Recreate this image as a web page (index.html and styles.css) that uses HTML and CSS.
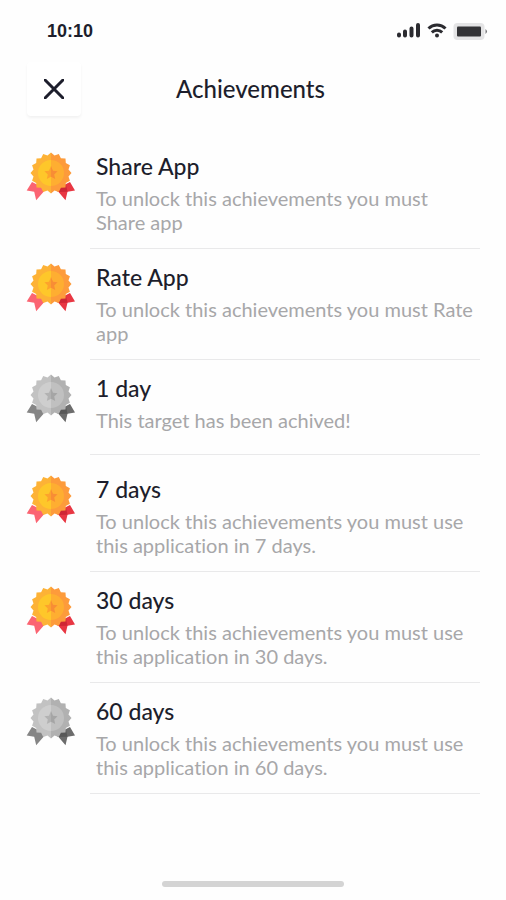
FILE: index.html
```html
<!doctype html>
<html lang="en">
<head>
<meta charset="utf-8">
<meta name="viewport" content="width=device-width, initial-scale=1">
<title>Achievements</title>
<link rel="stylesheet" href="styles.css">
</head>
<body>
<svg class="defs" aria-hidden="true">
	<symbol id="ribbon" viewBox="-25 -21 50 49">
		<path class="tail-left" d="M-19 9-24.300 17.500-16.800 18.700-14.800 27.200-5 16Z"/>
		<path class="tail-right" d="M19 9 24 17.500 16.500 18.700 14.500 27.200 5 16Z"/>
		<path class="tail-fold" d="M5 16 7 19 16.500 18.700 15 12Z"/>
		<path class="rim-left" d="M0-20.5-3.5-17.5-7.8-18.9-9.9-14.8-14.5-14.5-14.8-9.9-18.9-7.8-17.5-3.5-20.5 0-17.5 3.5-18.9 7.8-14.8 9.9-14.5 14.5-9.9 14.8-7.8 18.9-3.5 17.5 0 20.5Z"/>
		<path class="rim-right" d="M0-20.5 3.5-17.5 7.8-18.9 9.9-14.8 14.5-14.5 14.8-9.9 18.9-7.8 17.5-3.5 20.5 0 17.5 3.5 18.9 7.8 14.8 9.9 14.5 14.5 9.9 14.8 7.8 18.9 3.5 17.5 0 20.5Z"/>
		<path class="disc-left" d="M0-13a13 13 0 0 0 0 26Z"/>
		<path class="disc-right" d="M0-13a13 13 0 0 1 0 26Z"/>
		<path class="star-left" d="M0-7-2-2.2-6.600-1.8-3.2 1.6-4.2 6 0 3.8Z"/>
		<path class="star-right" d="M0-7 2-2.2 6.600-1.8 3.2 1.6 4.2 6 0 3.8Z"/>
	</symbol>
</svg>

<div class="status">
	<span class="time">10:10</span>
	<svg class="signals" viewBox="0 0 92 20" aria-hidden="true">
		<g class="bars">
			<path d="M3 13.5v1M9 10.5v4M15.5 7.5v7M22 4v10.500"/>
		</g>
		<g class="wifi">
			<path d="M32.500 7.500a12 12 0 0 1 17 0M35.800 11.300a7.500 7.500 0 0 1 10.400 0"/>
			<circle cx="41" cy="14.500" r="2"/>
		</g>
		<rect class="battery" x="57.500" y="2" width="31" height="17" rx="4"/>
		<rect class="charge" x="61" y="5.500" width="24" height="10" rx="1"/>
		<path class="tip" d="M89.500 8q3 2.500 0 5Z"/>
	</svg>
</div>

<header class="header">
	<button class="close" type="button" aria-label="Close">
		<svg viewBox="0 0 20 20" aria-hidden="true"><path d="M1 1 19 19M19 1 1 19"/></svg>
	</button>
	<h1>Achievements</h1>
</header>

<ul class="list">
	<li>
		<svg class="medal" aria-hidden="true"><use href="#ribbon"/></svg>
		<div class="info">
			<h2>Share App</h2>
			<p>To unlock this achievements you must Share app</p>
		</div>
	</li>
	<li>
		<svg class="medal" aria-hidden="true"><use href="#ribbon"/></svg>
		<div class="info">
			<h2>Rate App</h2>
			<p>To unlock this achievements you must Rate app</p>
		</div>
	</li>
	<li class="short">
		<svg class="medal grey" aria-hidden="true"><use href="#ribbon"/></svg>
		<div class="info">
			<h2>1 day</h2>
			<p>This target has been achived!</p>
		</div>
	</li>
	<li>
		<svg class="medal" aria-hidden="true"><use href="#ribbon"/></svg>
		<div class="info">
			<h2>7 days</h2>
			<p>To unlock this achievements you must use this application in 7 days.</p>
		</div>
	</li>
	<li>
		<svg class="medal" aria-hidden="true"><use href="#ribbon"/></svg>
		<div class="info">
			<h2>30 days</h2>
			<p>To unlock this achievements you must use this application in 30 days.</p>
		</div>
	</li>
	<li>
		<svg class="medal grey" aria-hidden="true"><use href="#ribbon"/></svg>
		<div class="info">
			<h2>60 days</h2>
			<p>To unlock this achievements you must use this application in 60 days.</p>
		</div>
	</li>
</ul>

<div class="home"></div>
</body>
</html>
```
FILE: styles.css
```css
* {
	box-sizing: border-box;
}
body {
	display: flex;
	flex-direction: column;
	min-height: 100vh;
	margin: 0;
	background: #fefefe;
	color: #1d1e2c;
	font-family: Lato, "Noto Sans", sans-serif;
	font-variant-ligatures: none;
}
h1, h2, p, ul {
	margin: 0;
	padding: 0;
}
.defs {
	position: absolute;
	width: 0;
	height: 0;
}

/* status bar */
.status {
	display: flex;
	align-items: center;
	justify-content: space-between;
	height: 62px;
	padding: 0 18px 0 47px;
}
.time {
	font: bold 18px/20px "Liberation Sans", Arial, sans-serif;
}
.signals {
	width: 92px;
	height: 20px;
}
.bars path {
	fill: none;
	stroke: #2b2b30;
	stroke-width: 4;
	stroke-linecap: round;
}
.wifi path {
	fill: none;
	stroke: #2b2b30;
	stroke-width: 3;
}
.wifi circle {
	fill: #2b2b30;
}
.battery {
	fill: #e4e4e5;
}
.charge {
	fill: #333336;
}
.tip {
	fill: #77777a;
}

/* header */
.header {
	display: grid;
	grid-template-columns: 54px 1fr 54px;
	align-items: center;
	height: 76px;
	padding: 0 32px 23px 27px;
}
.header h1 {
	font-size: 24px;
	line-height: 28px;
	font-weight: 500;
	text-align: center;
}
.close {
	display: flex;
	align-items: center;
	justify-content: center;
	width: 54px;
	height: 54px;
	padding: 0;
	border: 0;
	border-radius: 4px;
	background: #fff;
	box-shadow: 0 2px 3px rgba(0, 0, 0, .05);
	cursor: pointer;
}
.close svg {
	width: 20px;
	height: 20px;
	fill: none;
	stroke: #1d1e2c;
	stroke-width: 3;
	stroke-linecap: round;
}

/* achievements */
.list {
	list-style: none;
	padding: 0 26px;
}
.list li {
	display: flex;
	gap: 14px;
}
.list .short {
	margin-bottom: 6px;
}
.info {
	flex: 1;
	min-height: 95px;
	padding: 16px 0 14px 6px;
	border-bottom: 1px solid #e9e9ea;
}
.info h2 {
	margin-bottom: 8px;
	font-size: 23px;
	line-height: 24px;
	font-weight: 500;
}
.info p {
	font-size: 20px;
	line-height: 24px;
	color: #a7a7a9;
}

/* medal, gold by default */
.medal {
	--rim-left: #fdb236;
	--rim-right: #fd9b3b;
	--disc-left: #fec72a;
	--disc-right: #feae31;
	--star-left: #fda32c;
	--star-right: #f88d35;
	--tail-left: #fb6472;
	--tail-right: #e83743;
	--tail-fold: #cf2735;
	flex: none;
	width: 50px;
	height: 49px;
	margin-top: 14px;
}
.medal.grey {
	--rim-left: #c2c2c2;
	--rim-right: #b1b1b1;
	--disc-left: #cecece;
	--disc-right: #c0c0c0;
	--star-left: #b2b2b2;
	--star-right: #a5a5a5;
	--tail-left: #858585;
	--tail-right: #6c6c6c;
	--tail-fold: #585858;
}
.rim-left { fill: var(--rim-left); }
.rim-right { fill: var(--rim-right); }
.disc-left { fill: var(--disc-left); }
.disc-right { fill: var(--disc-right); }
.star-left { fill: var(--star-left); }
.star-right { fill: var(--star-right); }
.tail-left { fill: var(--tail-left); }
.tail-right { fill: var(--tail-right); }
.tail-fold { fill: var(--tail-fold); }

/* home indicator */
.home {
	width: 36%;
	height: 6px;
	margin: auto auto 13px;
	border-radius: 3px;
	background: #d4d4d4;
}
```
